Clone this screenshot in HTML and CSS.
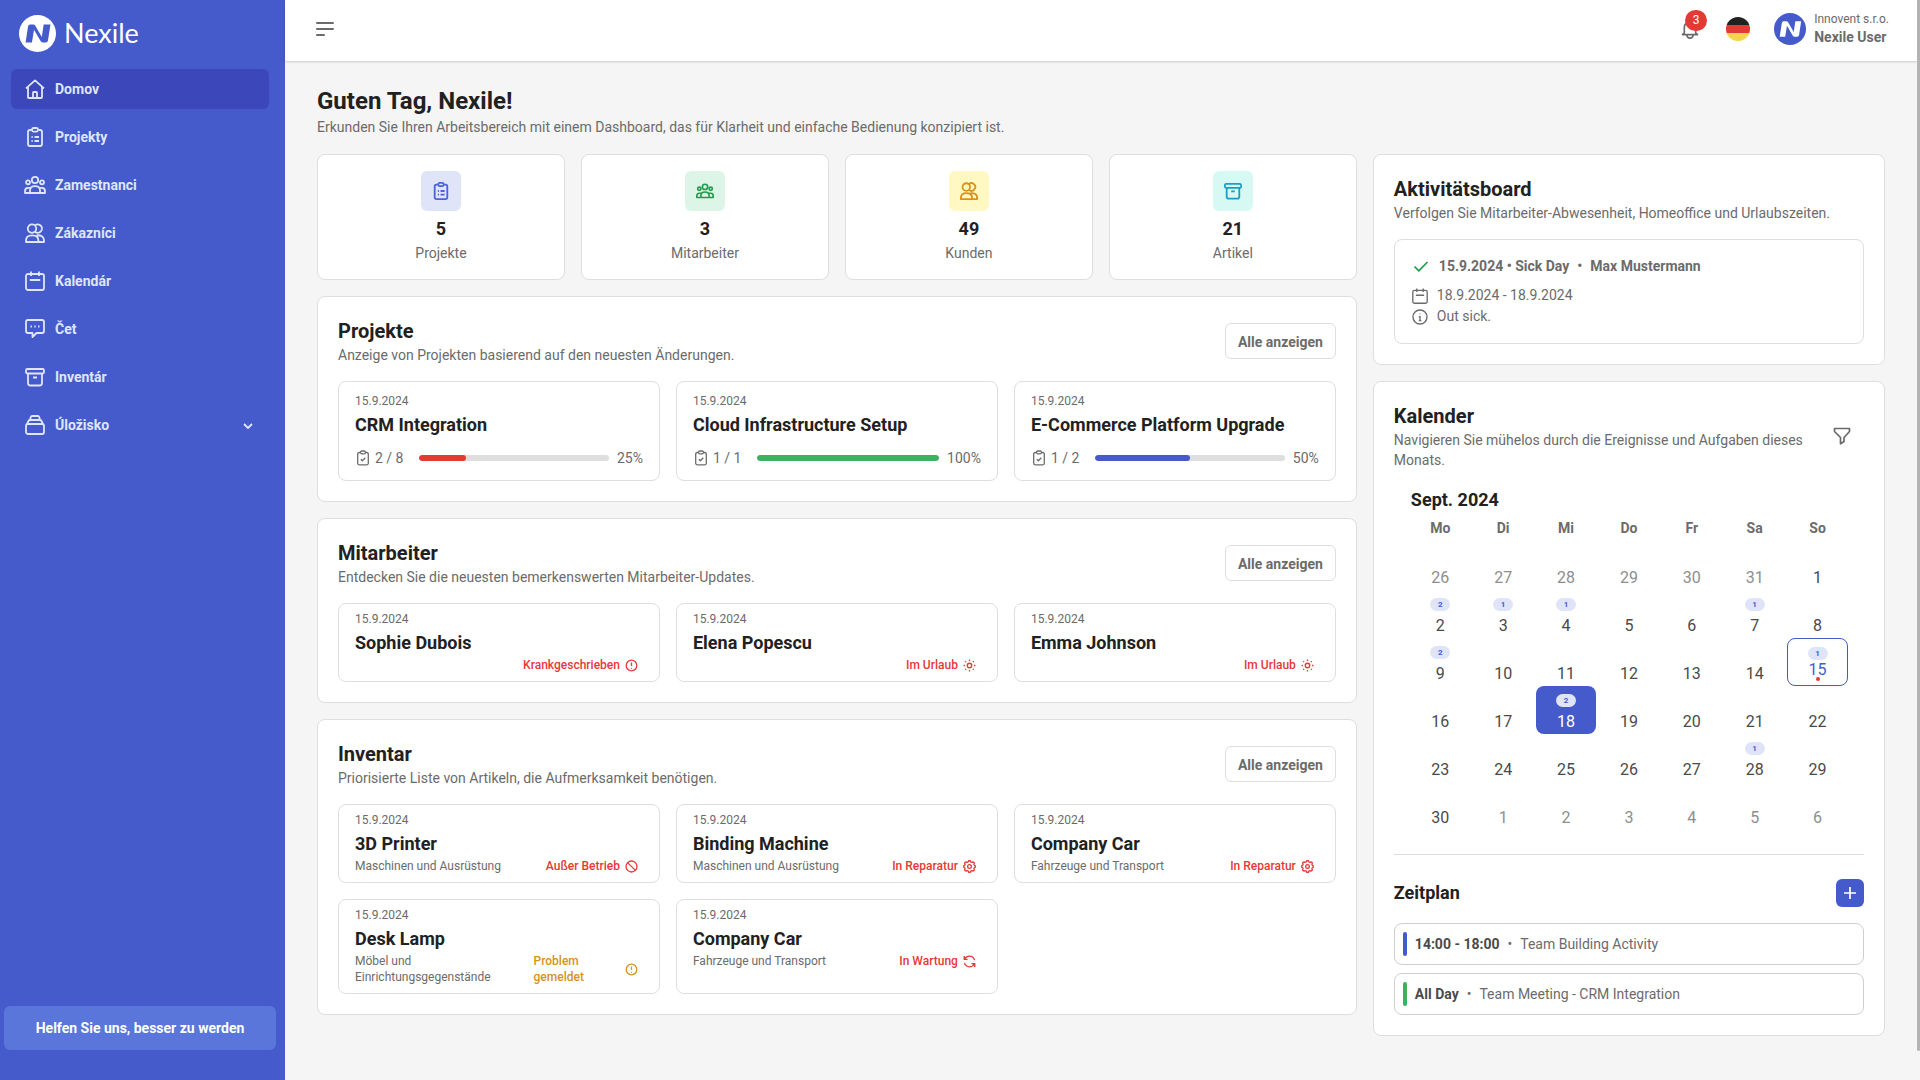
FILE: index.html
```html
<!DOCTYPE html>
<html lang="de">
<head>
<meta charset="utf-8">
<meta name="viewport" content="width=device-width, initial-scale=1">
<title>Nexile</title>
<link rel="stylesheet" href="styles.css">
</head>
<body>
<svg class="sprite" aria-hidden="true">
  <symbol id="i-logo" viewBox="0 0 36 36"><path d="M6.400 26.800 8.800 11.200Q9.100 9.200 11 9.200H13.800Q15.200 9.200 16 10.600L22.200 21.400 24 9.200H30.600L28.200 24.800Q27.900 26.800 26 26.800H23.200Q21.800 26.800 21 25.400L14.600 14.400 12.600 26.800Z"/></symbol>
  <symbol id="i-home" viewBox="0 0 20 20"><path d="M1 9.400 10 1.400l9 8M3 8v10.200q0 .8.8.8h12.400q.8 0 .8-.8V8M8 19v-5.200q0-.8.8-.8h2.400q.8 0 .8.8V19"/></symbol>
  <symbol id="i-list" viewBox="0 0 20 20"><path d="M6.500 3H5Q3 3 3 5v12q0 2 2 2h10q2 0 2-2V5q0-2-2-2h-1.500"/><path d="M6.800 2.600Q7.200 1 8.600 1h2.800q1.400 0 1.800 1.600-.4 2-1.800 2H8.600q-1.400 0-1.800-2ZM6.500 10h1.200M9.500 10h4.500M6.500 14h1.200M9.500 14h4.500"/></symbol>
  <symbol id="i-team" viewBox="0 0 22 20"><circle cx="11" cy="5" r="3.200"/><circle cx="4" cy="7.300" r="2"/><circle cx="18" cy="7.300" r="2"/><path d="M6 18v-2.500q0-4.300 5-4.300t5 4.300V18ZM6 18H1v-1.800q0-3.400 3-3.400h2.500M16 18h5v-1.800q0-3.400-3-3.400h-2.500"/></symbol>
  <symbol id="i-people" viewBox="0 0 20 20"><circle cx="7" cy="5.600" r="4.200"/><path d="M10 2.400a4.200 4.200 0 1 1 0 6.400"/><path d="M1 19v-1.500q0-5.200 6.200-5.200t6.200 5.200V19ZM11.500 12.300q7.500-.4 7.500 5.200V19h-5.500"/></symbol>
  <symbol id="i-cal" viewBox="0 0 20 20"><rect x="1" y="3" width="18" height="16" rx="2"/><path d="M6 .5V5M14 .5V5M4.800 9h10.400"/></symbol>
  <symbol id="i-chat" viewBox="0 0 20 20"><path d="M3 1h14q2 0 2 2v9q0 2-2 2h-5.500L7.500 18v-4H3q-2 0-2-2V3q0-2 2-2Z"/><path d="M5.500 7.500h1.400M9.300 7.500h1.400M13.100 7.500h1.400"/></symbol>
  <symbol id="i-box" viewBox="0 0 20 20"><rect x="1" y="2" width="18" height="4.500" rx="1.500"/><path d="M3 6.500V16q0 2.500 2.500 2.500h9q2.500 0 2.500-2.500V6.500M8 10.500h4"/></symbol>
  <symbol id="i-store" viewBox="0 0 20 20"><rect x="1" y="9" width="18" height="10" rx="2"/><path d="M2 9.200 3.500 6Q4 5 5 5h10q1 0 1.500 1L18 9.200M5 5l.8-3Q6.100 1 7.200 1h5.600q1.100 0 1.400 1L15 5"/></symbol>
  <symbol id="i-down" viewBox="0 0 10 10"><path d="m1 3 4 4 4-4"/></symbol>
  <symbol id="i-menu" viewBox="0 0 18 14"><path d="M1 1h16M1 7h16M1 13h7"/></symbol>
  <symbol id="i-bell" viewBox="0 0 20 20"><path d="M4.300 14V8.500a5.700 5.700 0 0 1 11.400 0V14l1.800 1.600H2.500ZM6.800 16q.4 3.200 3.200 3.200t3.200-3.200"/></symbol>
  <symbol id="i-flag" viewBox="0 0 24 24"><path fill="#212121" d="M0 0h24v8H0Z"/><path fill="#e53935" d="M0 8h24v8H0Z"/><path fill="#f9d34f" d="M0 16h24v8H0Z"/></symbol>
  <symbol id="i-task" viewBox="0 0 14 16"><path d="M4 2.500H3.200Q1.700 2.500 1.700 4v9.300q0 1.500 1.500 1.500h7.600q1.500 0 1.500-1.500V4q0-1.500-1.500-1.500H10M4.500 2.300Q4.700 1 5.800 1h2.400q1.100 0 1.300 1.300-.2 1.500-1.300 1.500H5.800q-1.100 0-1.300-1.500ZM4.800 9.200l1.600 1.600 2.900-3"/></symbol>
  <symbol id="i-alert" viewBox="0 0 14 14"><circle cx="7" cy="7" r="5.700"/><path d="M7 3.800v3.700M7 9.400v1"/></symbol>
  <symbol id="i-sun" viewBox="0 0 14 14"><circle cx="7" cy="7" r="2.400"/><path d="M7 .6v1.600M7 11.800v1.600M.6 7h1.600M11.800 7h1.600M2.400 2.400l1 1M10.600 10.600l1 1M2.400 11.600l1-1M10.600 3.400l1-1"/></symbol>
  <symbol id="i-ban" viewBox="0 0 14 14"><circle cx="7" cy="7" r="5.900"/><path d="m2.800 2.800 8.400 8.400"/></symbol>
  <symbol id="i-gear" viewBox="0 0 14 14"><path d="M5.700 2 6 .8h2L8.300 2l1.500.6 1.200-.6L12.300 3.300l-.6 1.200.5 1.200 1 .4v1.800l-1 .4-.5 1.200.6 1.200L11 12l-1.200-.6-1.500.6-.3 1.200H6L5.700 12l-1.500-.6L3 12l-1.300-1.300.6-1.200-.5-1.200-1-.4V6.100l1-.4.5-1.200-.6-1.200L3 2l1.200.6Z"/><circle cx="7" cy="7" r="2"/></symbol>
  <symbol id="i-sync" viewBox="0 0 14 14"><path d="M1.300 1.200v3.600h3.600M1.500 4.600Q3.500 1.300 7 1.300q4 0 5.500 4.200M12.700 12.800V9.200H9.100M12.500 9.400Q10.500 12.700 7 12.700q-4 0-5.500-4.200"/></symbol>
  <symbol id="i-check" viewBox="0 0 16 16"><path d="m1.500 8.500 4.300 4.300L14.500 4"/></symbol>
  <symbol id="i-info" viewBox="0 0 20 20"><circle cx="10" cy="10" r="8.800"/><path d="M8.500 9.500H10v5M8.500 14.500h3.200M10 5.500v1.200"/></symbol>
  <symbol id="i-filter" viewBox="0 0 18 18"><path d="M1.500 1.500h15v3L11 10.500v4L7.500 16.800v-6.300L1.500 4.500Z"/></symbol>
  <symbol id="i-plus" viewBox="0 0 12 12"><path d="M6 0v12M0 6h12"/></symbol>
</svg>

<div class="app">
  <aside class="sidebar">
    <a class="brand" href="#"><span class="mark"><svg><use href="#i-logo"/></svg></span><span class="brand-name">Nexile</span></a>
    <nav class="nav">
      <a class="nav-item active" href="#"><svg class="icon"><use href="#i-home"/></svg>Domov</a>
      <a class="nav-item" href="#"><svg class="icon"><use href="#i-list"/></svg>Projekty</a>
      <a class="nav-item" href="#"><svg class="icon wide"><use href="#i-team"/></svg>Zamestnanci</a>
      <a class="nav-item" href="#"><svg class="icon"><use href="#i-people"/></svg>Zákazníci</a>
      <a class="nav-item" href="#"><svg class="icon"><use href="#i-cal"/></svg>Kalendár</a>
      <a class="nav-item" href="#"><svg class="icon"><use href="#i-chat"/></svg>Čet</a>
      <a class="nav-item" href="#"><svg class="icon"><use href="#i-box"/></svg>Inventár</a>
      <a class="nav-item" href="#"><svg class="icon"><use href="#i-store"/></svg>Úložisko<svg class="icon chevron"><use href="#i-down"/></svg></a>
    </nav>
    <button class="feedback" type="button">Helfen Sie uns, besser zu werden</button>
  </aside>

  <div class="page">
    <header class="topbar">
      <button class="bare menu" type="button" aria-label="Menü"><svg class="icon"><use href="#i-menu"/></svg></button>
      <div class="tools">
        <button class="bare bell" type="button" aria-label="Benachrichtigungen"><svg class="icon"><use href="#i-bell"/></svg><span class="count">3</span></button>
        <button class="bare flag" type="button" aria-label="Deutsch"><svg><use href="#i-flag"/></svg></button>
        <a class="user" href="#">
          <span class="mark avatar"><svg><use href="#i-logo"/></svg></span>
          <span class="user-text"><span class="company">Innovent s.r.o.</span><span class="user-name">Nexile User</span></span>
        </a>
      </div>
    </header>

    <main class="main">
      <h1 class="hello">Guten Tag, Nexile!</h1>
      <p class="sub">Erkunden Sie Ihren Arbeitsbereich mit einem Dashboard, das für Klarheit und einfache Bedienung konzipiert ist.</p>

      <div class="columns">
        <div class="col-main">
          <div class="stats">
            <div class="card stat"><span class="tile blue"><svg class="icon"><use href="#i-list"/></svg></span><strong>5</strong><span>Projekte</span></div>
            <div class="card stat"><span class="tile green"><svg class="icon"><use href="#i-team"/></svg></span><strong>3</strong><span>Mitarbeiter</span></div>
            <div class="card stat"><span class="tile yellow"><svg class="icon"><use href="#i-people"/></svg></span><strong>49</strong><span>Kunden</span></div>
            <div class="card stat"><span class="tile cyan"><svg class="icon"><use href="#i-box"/></svg></span><strong>21</strong><span>Artikel</span></div>
          </div>

          <section class="card panel">
            <div class="panel-head"><div><h2>Projekte</h2><p class="sub">Anzeige von Projekten basierend auf den neuesten Änderungen.</p></div><button class="outline" type="button">Alle anzeigen</button></div>
            <div class="tiles">
              <article class="card item project"><time>15.9.2024</time><h3>CRM Integration</h3><div class="progress-row"><span class="tasks"><svg class="icon"><use href="#i-task"/></svg>2 / 8</span><progress class="red" max="100" value="25" aria-label="Fortschritt"></progress><span>25%</span></div></article>
              <article class="card item project"><time>15.9.2024</time><h3>Cloud Infrastructure Setup</h3><div class="progress-row"><span class="tasks"><svg class="icon"><use href="#i-task"/></svg>1 / 1</span><progress class="green" max="100" value="100" aria-label="Fortschritt"></progress><span>100%</span></div></article>
              <article class="card item project"><time>15.9.2024</time><h3>E-Commerce Platform Upgrade</h3><div class="progress-row"><span class="tasks"><svg class="icon"><use href="#i-task"/></svg>1 / 2</span><progress class="blue" max="100" value="50" aria-label="Fortschritt"></progress><span>50%</span></div></article>
            </div>
          </section>

          <section class="card panel">
            <div class="panel-head"><div><h2>Mitarbeiter</h2><p class="sub">Entdecken Sie die neuesten bemerkenswerten Mitarbeiter-Updates.</p></div><button class="outline" type="button">Alle anzeigen</button></div>
            <div class="tiles">
              <article class="card item"><time>15.9.2024</time><h3>Sophie Dubois</h3><div class="status-row"><span class="status">Krankgeschrieben<svg class="icon"><use href="#i-alert"/></svg></span></div></article>
              <article class="card item"><time>15.9.2024</time><h3>Elena Popescu</h3><div class="status-row"><span class="status">Im Urlaub<svg class="icon"><use href="#i-sun"/></svg></span></div></article>
              <article class="card item"><time>15.9.2024</time><h3>Emma Johnson</h3><div class="status-row"><span class="status">Im Urlaub<svg class="icon"><use href="#i-sun"/></svg></span></div></article>
            </div>
          </section>

          <section class="card panel">
            <div class="panel-head"><div><h2>Inventar</h2><p class="sub">Priorisierte Liste von Artikeln, die Aufmerksamkeit benötigen.</p></div><button class="outline" type="button">Alle anzeigen</button></div>
            <div class="tiles">
              <article class="card item"><time>15.9.2024</time><h3>3D Printer</h3><div class="status-row"><span class="place">Maschinen und Ausrüstung</span><span class="status">Außer Betrieb<svg class="icon"><use href="#i-ban"/></svg></span></div></article>
              <article class="card item"><time>15.9.2024</time><h3>Binding Machine</h3><div class="status-row"><span class="place">Maschinen und Ausrüstung</span><span class="status">In Reparatur<svg class="icon"><use href="#i-gear"/></svg></span></div></article>
              <article class="card item"><time>15.9.2024</time><h3>Company Car</h3><div class="status-row"><span class="place">Fahrzeuge und Transport</span><span class="status">In Reparatur<svg class="icon"><use href="#i-gear"/></svg></span></div></article>
              <article class="card item"><time>15.9.2024</time><h3>Desk Lamp</h3><div class="status-row"><span class="place">Möbel und Einrichtungsgegenstände</span><span class="status warn">Problem gemeldet<svg class="icon"><use href="#i-alert"/></svg></span></div></article>
              <article class="card item"><time>15.9.2024</time><h3>Company Car</h3><div class="status-row"><span class="place">Fahrzeuge und Transport</span><span class="status">In Wartung<svg class="icon"><use href="#i-sync"/></svg></span></div></article>
            </div>
          </section>
        </div>

        <div class="col-side">
          <section class="card panel">
            <div class="panel-head"><div><h2>Aktivitätsboard</h2><p class="sub">Verfolgen Sie Mitarbeiter-Abwesenheit, Homeoffice und Urlaubszeiten.</p></div></div>
            <article class="card activity">
              <h4><svg class="icon ok"><use href="#i-check"/></svg><span>15.9.2024 • Sick Day</span><span>•</span><span>Max Mustermann</span></h4>
              <p><svg class="icon"><use href="#i-cal"/></svg>18.9.2024 - 18.9.2024</p>
              <p><svg class="icon"><use href="#i-info"/></svg>Out sick.</p>
            </article>
          </section>

          <section class="card panel">
            <div class="panel-head calendar-head"><div><h2>Kalender</h2><p class="sub">Navigieren Sie mühelos durch die Ereignisse und Aufgaben dieses Monats.</p></div><button class="bare filter" type="button" aria-label="Filter"><svg class="icon"><use href="#i-filter"/></svg></button></div>
            <h3 class="month">Sept. 2024</h3>
            <table class="calendar">
              <thead><tr><th>Mo</th><th>Di</th><th>Mi</th><th>Do</th><th>Fr</th><th>Sa</th><th>So</th></tr></thead>
              <tbody>
                <tr><td><button class="day other">26</button></td><td><button class="day other">27</button></td><td><button class="day other">28</button></td><td><button class="day other">29</button></td><td><button class="day other">30</button></td><td><button class="day other">31</button></td><td><button class="day">1</button></td></tr>
                <tr><td><button class="day"><span class="events">2</span>2</button></td><td><button class="day"><span class="events">1</span>3</button></td><td><button class="day"><span class="events">1</span>4</button></td><td><button class="day">5</button></td><td><button class="day">6</button></td><td><button class="day"><span class="events">1</span>7</button></td><td><button class="day">8</button></td></tr>
                <tr><td><button class="day"><span class="events">2</span>9</button></td><td><button class="day">10</button></td><td><button class="day">11</button></td><td><button class="day">12</button></td><td><button class="day">13</button></td><td><button class="day">14</button></td><td><button class="day today"><span class="events">1</span>15</button></td></tr>
                <tr><td><button class="day">16</button></td><td><button class="day">17</button></td><td><button class="day selected"><span class="events">2</span>18</button></td><td><button class="day">19</button></td><td><button class="day">20</button></td><td><button class="day">21</button></td><td><button class="day">22</button></td></tr>
                <tr><td><button class="day">23</button></td><td><button class="day">24</button></td><td><button class="day">25</button></td><td><button class="day">26</button></td><td><button class="day">27</button></td><td><button class="day"><span class="events">1</span>28</button></td><td><button class="day">29</button></td></tr>
                <tr><td><button class="day">30</button></td><td><button class="day other">1</button></td><td><button class="day other">2</button></td><td><button class="day other">3</button></td><td><button class="day other">4</button></td><td><button class="day other">5</button></td><td><button class="day other">6</button></td></tr>
              </tbody>
            </table>
            <div class="schedule">
              <div class="schedule-head"><h3>Zeitplan</h3><button class="add" type="button" aria-label="Hinzufügen"><svg class="icon"><use href="#i-plus"/></svg></button></div>
              <div class="card slot"><span class="bar blue"></span><strong>14:00 - 18:00</strong><span>•</span><span>Team Building Activity</span></div>
              <div class="card slot"><span class="bar green"></span><strong>All Day</strong><span>•</span><span>Team Meeting - CRM Integration</span></div>
            </div>
          </section>
        </div>
      </div>
    </main>
  </div>
</div>
<div class="scroll-thumb"></div>
</body>
</html>
```

FILE: styles.css
```css
:root {
  --blue: #455bcb;
  --blue-soft: #dfe4f8;
  --green: #3cb261;
  --red: #e53935;
  --text: #212121;
  --muted: #6b6b6b;
  --line: #dedede;
}

* { box-sizing: border-box; }

body {
  margin: 0;
  background: #f5f5f5;
  color: var(--muted);
  font: 400 14px/20px Roboto, "Liberation Sans", sans-serif;
}

h1, h2, h3, h4, p { margin: 0; }
h1, h2, h3 { color: var(--text); font-weight: 700; }
h2 { font-size: 20px; line-height: 28px; }
h3 { font-size: 18px; line-height: 24px; }
a { color: inherit; text-decoration: none; }
button { font: inherit; color: inherit; padding: 0; cursor: pointer; }

.sprite { position: absolute; width: 0; height: 0; }

.icon {
  width: 20px;
  height: 20px;
  flex: none;
  fill: none;
  stroke: currentColor;
  stroke-width: 1.7;
  stroke-linejoin: round;
}

.bare { border: 0; background: none; display: flex; }

.card {
  background: #fff;
  border: 1px solid var(--line);
  border-radius: 8px;
}

.app { display: flex; min-height: 100vh; }

/* Sidebar */
.sidebar {
  width: 285px;
  flex: none;
  display: flex;
  flex-direction: column;
  padding: 14px 9px 30px 4px;
  background: var(--blue);
  color: #dfe5fa;
}

.brand { display: flex; align-items: center; gap: 8px; padding-left: 15px; height: 38px; }

.mark {
  display: flex;
  width: 37px;
  height: 37px;
  border-radius: 50%;
  background: #fff;
  fill: var(--blue);
}
.mark svg { width: 100%; height: 100%; }

.brand-name { color: #fff; font: 400 27px/32px Lato, sans-serif; }

.nav { display: flex; flex-direction: column; gap: 8px; padding: 17px 7px 0; }

.nav-item {
  display: flex;
  align-items: center;
  gap: 10px;
  height: 40px;
  padding: 0 14px;
  border-radius: 6px;
  font-weight: 700;
}
.nav-item.active { background: #3c48b9; }
.nav-item .icon { stroke-width: 1.8; }
.nav-item .wide { width: 22px; margin: 0 -1px; }
.nav-item .chevron { width: 10px; height: 10px; margin: 2px 2px 0 auto; }

.feedback {
  height: 44px;
  margin-top: auto;
  border: 0;
  border-radius: 6px;
  background: #5a76da;
  color: #fff;
  font-weight: 700;
}

/* Header */
.page { flex: 1; min-width: 0; padding-right: 3px; }

.topbar {
  display: flex;
  align-items: center;
  justify-content: space-between;
  height: 61px;
  padding: 0 28px 4px 31px;
  background: #fff;
  box-shadow: 0 1px 2px rgba(0, 0, 0, 0.18);
}

.menu .icon { width: 18px; height: 14px; stroke-width: 2; stroke-linecap: round; }

.tools { display: flex; align-items: center; }

.bell { position: relative; margin-right: 26px; }
.count {
  position: absolute;
  top: -9px;
  left: 5px;
  width: 22px;
  height: 21px;
  border-radius: 11px;
  background: var(--red);
  color: #fff;
  font-size: 12px;
  line-height: 21px;
}

.flag svg { width: 24px; height: 24px; border-radius: 50%; }

.user { display: flex; align-items: center; gap: 8px; margin-left: 24px; }
.avatar { width: 32px; height: 32px; background: var(--blue); fill: #fff; }
.user-text { display: flex; flex-direction: column; padding-bottom: 1px; line-height: 18px; }
.company { font-size: 12px; }
.user-name { font-weight: 700; }

/* Content */
.main { padding: 24px 32px 32px; }
.hello { font-size: 24px; line-height: 32px; }

.columns { display: flex; align-items: flex-start; gap: 16px; margin-top: 17px; }
.col-main, .col-side { display: flex; flex-direction: column; gap: 16px; min-width: 0; }
.col-main { flex: 67 1 0; }
.col-side { flex: 33 1 0; }

.stats { display: grid; grid-template-columns: repeat(4, 1fr); gap: 16px; }
.stat { display: flex; flex-direction: column; align-items: center; gap: 2px; padding: 16px; }
.stat strong { margin-top: 4px; color: var(--text); font-size: 18px; line-height: 24px; }

.tile { display: grid; place-items: center; width: 40px; height: 40px; border-radius: 6px; }
.tile .icon { width: 18px; height: 18px; stroke-width: 2; }
.tile.blue { background: var(--blue-soft); color: #4a63d8; }
.tile.green { background: #dcf5e6; color: #1f9d4d; }
.tile.yellow { background: #fff8c2; color: #d9911a; }
.tile.cyan { background: #d6f9f4; color: #1ba0c4; }

.panel { padding: 20px; }
.panel-head { display: flex; align-items: center; justify-content: space-between; margin-bottom: 16px; }

.outline {
  flex: none;
  height: 36px;
  padding: 2px 12px 0;
  border: 1px solid var(--line);
  border-radius: 6px;
  background: #fff;
  font-weight: 700;
}

.tiles { display: grid; grid-template-columns: repeat(3, 1fr); gap: 16px; }

.item { padding: 7px 16px 8px; }
.item time { display: block; font-size: 12px; line-height: 16px; }
.item h3 { margin-top: 4px; }
.project { padding: 11px 16px 12px; }

.progress-row { display: flex; align-items: center; gap: 8px; margin-top: 11px; }
.tasks { display: flex; align-items: center; gap: 4px; width: 56px; }
.tasks .icon { width: 16px; height: 16px; stroke-width: 1.3; }

progress {
  flex: 1;
  min-width: 0;
  height: 6px;
  appearance: none;
  border: 0;
  border-radius: 3px;
  overflow: hidden;
  background: var(--line);
}
progress::-webkit-progress-bar { background: var(--line); }
progress::-webkit-progress-value { border-radius: 3px; background: currentColor; }
progress.red { color: var(--red); }
progress.green { color: var(--green); }
progress.blue { color: var(--blue); }

.status-row { display: flex; justify-content: space-between; margin-top: 2px; font-size: 12px; line-height: 16px; }
.place { flex: 0 0 62%; }
.status {
  display: flex;
  align-items: center;
  gap: 5px;
  margin-left: auto;
  padding-right: 5px;
  color: var(--red);
  font-weight: 500;
}
.status.warn { color: #d9911a; }
.status .icon { width: 13px; height: 13px; stroke-width: 1.4; }

/* Activity board */
.activity { padding: 16px 17px; }
.activity h4 { display: flex; gap: 8px; margin-bottom: 9px; font-size: 14px; }
.activity p { display: flex; align-items: center; gap: 9px; line-height: 21px; }
.activity .icon { width: 16px; height: 16px; }
.activity .ok { margin: 2px 2px 0 1px; color: #1f9d4d; }

/* Calendar */
.calendar-head { margin-bottom: 18px; }
.filter { flex: none; padding: 11px; margin-right: 2px; }
.filter .icon { width: 18px; height: 18px; }

.month { padding: 0 17px 2px; }

.calendar { width: calc(100% - 30px); margin: 0 15px; table-layout: fixed; border-collapse: collapse; }
.calendar th { height: 28px; padding: 0; font-weight: 700; }
.calendar td { height: 48px; padding: 0 1px; }

.day {
  display: flex;
  flex-direction: column;
  align-items: center;
  justify-content: flex-end;
  gap: 5px;
  width: 100%;
  height: 48px;
  padding-bottom: 2px;
  border: 0;
  border-radius: 8px;
  background: none;
  color: #4a4a4a;
  font-size: 16px;
  line-height: 20px;
}
.day.other { color: #8e8e8e; }
.day.selected { background: var(--blue); color: #fff; }
.day.today {
  position: relative;
  gap: 0;
  padding-bottom: 5px;
  border: 1px solid var(--blue);
  color: var(--blue);
}
.day.today::after {
  content: "";
  position: absolute;
  bottom: 4px;
  left: 50%;
  width: 4px;
  height: 4px;
  margin-left: -2px;
  border-radius: 50%;
  background: var(--red);
}

.events {
  width: 20px;
  height: 13px;
  border-radius: 7px;
  background: var(--blue-soft);
  color: var(--blue);
  font-size: 8px;
  font-weight: 700;
  line-height: 13px;
}

.schedule {
  display: flex;
  flex-direction: column;
  gap: 8px;
  margin-top: 24px;
  padding-top: 24px;
  border-top: 1px solid var(--line);
}
.schedule-head { display: flex; align-items: center; justify-content: space-between; margin-bottom: 8px; }

.add {
  display: grid;
  place-items: center;
  width: 28px;
  height: 28px;
  border: 0;
  border-radius: 6px;
  background: var(--blue);
  color: #fff;
}
.add .icon { width: 12px; height: 12px; }

.slot { display: flex; align-items: center; gap: 8px; padding: 8px; border-color: #cfcfcf; }
.slot strong { color: #4a4a4a; }
.bar { width: 4px; height: 24px; border-radius: 2px; }
.bar.blue { background: var(--blue); }
.bar.green { background: var(--green); }

/* Thin page scroll indicator over the right edge */
.scroll-thumb {
  position: fixed;
  top: 0;
  right: 0;
  width: 3px;
  height: 97.3vh;
  border-radius: 0 0 3px 3px;
  background: #b3b3b3;
}
```
